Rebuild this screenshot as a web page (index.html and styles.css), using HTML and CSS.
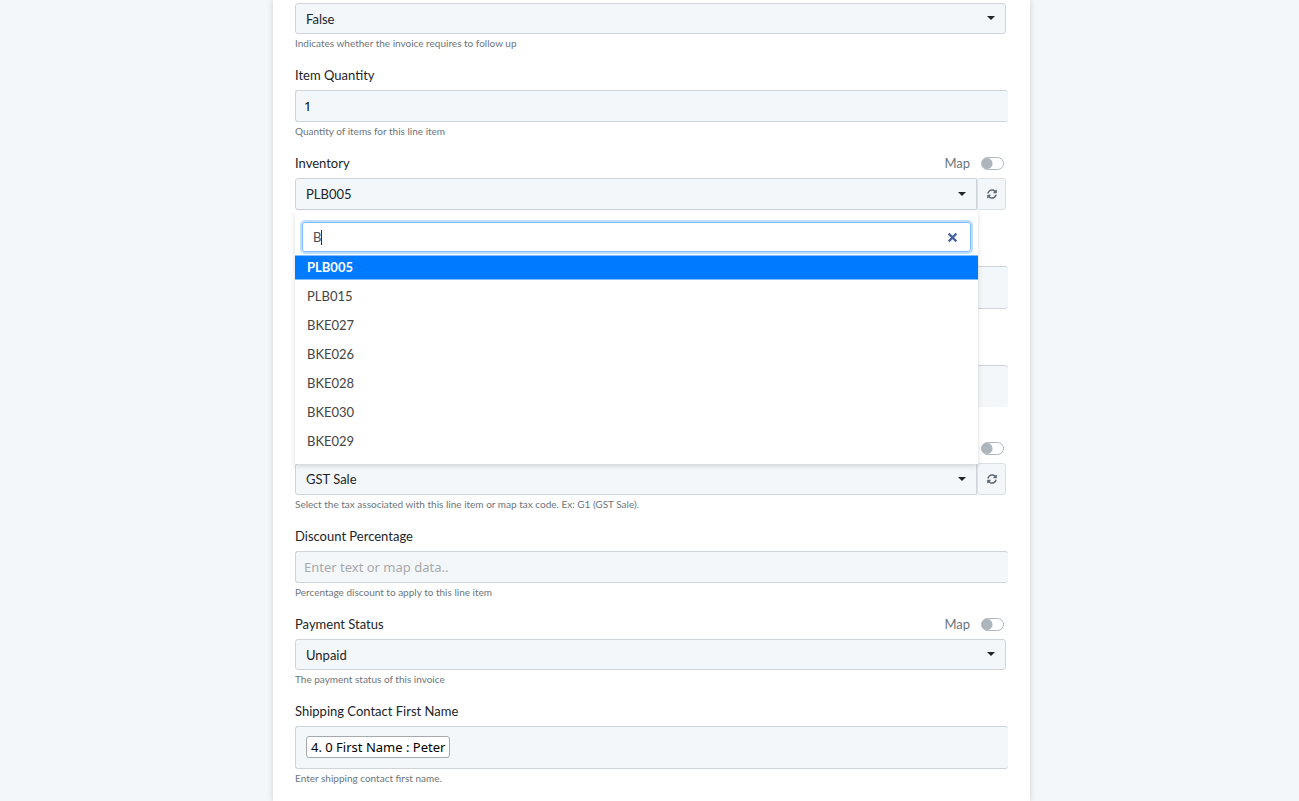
FILE: index.html
```html
<!DOCTYPE html>
<html lang="en">
<head>
  <meta charset="UTF-8">
  <meta name="viewport" content="width=device-width, initial-scale=1.0">
  <title>Invoice action</title>
  <link rel="stylesheet" href="styles.css">
</head>
<body>
  <svg class="sprite" aria-hidden="true">
    <symbol id="icon-refresh" viewBox="0 0 512 512">
      <path d="M370.7 133.3C339.500 104 298.900 88 255.800 88c-77.500.1-144.300 53.200-162.800 126.900-1.300 5.400-6.100 9.100-11.700 9.100H24.100c-7.500 0-13.200-6.800-11.800-14.200C33.900 94.900 134.800 8 256 8c66.400 0 126.800 26.100 171.300 68.700L463 41c15.100-15.100 41-4.400 41 17v134c0 13.300-10.700 24-24 24H346c-21.400 0-32.100-25.900-17-41l41.700-41.700zM32 296h134c21.400 0 32.100 25.900 17 41l-41.800 41.800c31.300 29.300 71.800 45.300 114.900 45.300 77.400-.1 144.300-53.100 162.800-126.900 1.300-5.400 6.100-9.100 11.700-9.100h57.300c7.500 0 13.200 6.800 11.800 14.200C478.100 417.100 377.200 504 256 504c-66.400 0-126.800-26.100-171.300-68.700L49 471c-15.100 15.100-41 4.400-41-17V320c0-13.300 10.700-24 24-24z"/>
    </symbol>
  </svg>

  <main class="card">
    <form class="form">
      <div class="field">
        <div class="select-wrap short">
          <select class="control" id="follow-up" aria-label="Follow Up">
            <option>False</option>
          </select>
        </div>
        <p class="help">Indicates whether the invoice requires to follow up</p>
      </div>

      <div class="field">
        <div class="label-row">
          <label for="quantity">Item Quantity</label>
        </div>
        <input type="text" class="control text-control" id="quantity" value="1">
        <p class="help">Quantity of items for this line item</p>
      </div>

      <div class="field">
        <div class="label-row">
          <label for="inventory">Inventory</label>
          <label class="map">Map <input type="checkbox" class="toggle"></label>
        </div>
        <div class="select-group">
          <div class="select-wrap">
            <select class="control" id="inventory">
              <option>PLB005</option>
            </select>
          </div>
          <button type="button" class="refresh" aria-label="Refresh inventory">
            <svg><use href="#icon-refresh"/></svg>
          </button>
          <div class="dropdown">
            <div class="search">
              <input type="text" class="search-input" aria-label="Search inventory" value="B">
              <button type="button" class="clear" aria-label="Clear">
                <svg viewBox="0 0 10 10"><path d="M1.500 1.500 8.500 8.500M8.500 1.500 1.500 8.500"/></svg>
              </button>
            </div>
            <ul class="options" role="listbox" aria-label="Inventory">
              <li class="option active" role="option" aria-selected="true">PLB005</li>
              <li class="option" role="option">PLB015</li>
              <li class="option" role="option">BKE027</li>
              <li class="option" role="option">BKE026</li>
              <li class="option" role="option">BKE028</li>
              <li class="option" role="option">BKE030</li>
              <li class="option" role="option">BKE029</li>
            </ul>
          </div>
        </div>
        <p class="help"></p>
      </div>

      <div class="field">
        <div class="label-row"></div>
        <div class="control text-control tags"></div>
        <p class="help"></p>
      </div>

      <div class="field">
        <div class="label-row"></div>
        <div class="control text-control tags open"></div>
        <p class="help"></p>
      </div>

      <div class="field">
        <div class="label-row end">
          <div class="map"><input type="checkbox" class="toggle" aria-label="Map"></div>
        </div>
        <div class="select-group">
          <div class="select-wrap">
            <select class="control" id="tax" aria-label="Tax">
              <option>GST Sale</option>
            </select>
          </div>
          <button type="button" class="refresh" aria-label="Refresh tax">
            <svg><use href="#icon-refresh"/></svg>
          </button>
        </div>
        <p class="help">Select the tax associated with this line item or map tax code. Ex: G1 (GST Sale).</p>
      </div>

      <div class="field">
        <div class="label-row">
          <label for="discount">Discount Percentage</label>
        </div>
        <input type="text" class="control text-control" id="discount" placeholder="Enter text or map data..">
        <p class="help">Percentage discount to apply to this line item</p>
      </div>

      <div class="field">
        <div class="label-row">
          <label for="payment">Payment Status</label>
          <label class="map">Map <input type="checkbox" class="toggle"></label>
        </div>
        <div class="select-wrap short">
          <select class="control" id="payment">
            <option>Unpaid</option>
          </select>
        </div>
        <p class="help">The payment status of this invoice</p>
      </div>

      <div class="field">
        <div class="label-row">
          <span id="first-name-label">Shipping Contact First Name</span>
        </div>
        <div class="control text-control tags" role="textbox" tabindex="0" aria-labelledby="first-name-label">
          <span class="tag">4. 0 First Name : Peter</span>
        </div>
        <p class="help">Enter shipping contact first name.</p>
      </div>
    </form>
  </main>
</body>
</html>
```

FILE: styles.css
```css
* {
  margin: 0;
  padding: 0;
  box-sizing: border-box;
}

body {
  display: flex;
  justify-content: center;
  min-height: 100vh;
  padding-left: 4px;
  background-color: #f3f7fa;
  font-family: Lato, sans-serif;
  font-size: 13px;
  color: #212529;
}

.sprite {
  display: none;
}

/* Card */
.card {
  width: 100%;
  max-width: 757px;
  padding: 3px 22px 0;
  background-color: #fff;
  box-shadow: 0 0 6px rgba(0, 0, 0, 0.16);
}

.field {
  margin-bottom: 13px;
}

.label-row {
  display: flex;
  justify-content: space-between;
  align-items: center;
  height: 20px;
  margin-bottom: 5px;
  font-size: 13px;
}

.label-row.end {
  justify-content: flex-end;
}

.help {
  height: 16px;
  margin-top: 2px;
  font-size: 10px;
  line-height: 14px;
  color: #6c757d;
}

/* Controls */
.control {
  display: block;
  width: 100%;
  height: 32px;
  padding: 0 10px;
  border: 1px solid #ced4da;
  border-radius: 3px;
  background-color: #f3f7fa;
  font-family: inherit;
  font-size: 13px;
  color: #212529;
  outline: none;
  appearance: none;
}

.text-control {
  padding: 0 8px 1px;
  border-right: none;
  font-family: "Noto Sans", sans-serif;
  color: #000;
}

.text-control::placeholder {
  color: #a9a9a9;
}

.tags {
  display: flex;
  align-items: center;
  height: 43px;
  padding: 0 10px 1px;
}

.tags.open {
  height: 42px;
  border-bottom: none;
}

.tag {
  height: 22px;
  padding: 0 4px;
  border: 1px solid #a5a9ad;
  border-radius: 3px;
  background-color: #fff;
  line-height: 20px;
}

.select-wrap {
  position: relative;
  flex: 1;
}

.select-wrap::after {
  content: "";
  position: absolute;
  top: 13px;
  right: 11px;
  border: 4px solid transparent;
  border-top-color: #212529;
  border-bottom: none;
  pointer-events: none;
}

.short {
  margin-right: 2px;
}

.short .control {
  height: 31px;
}

.select-group {
  position: relative;
  display: flex;
  margin-right: 2px;
}

.select-group .control {
  border-radius: 3px 0 0 3px;
}

.select-group .select-wrap::after {
  top: 14px;
}

.refresh {
  display: flex;
  align-items: center;
  justify-content: center;
  width: 29px;
  height: 32px;
  border: 1px solid #dbe0e5;
  border-radius: 3px;
  background-color: #f3f7fa;
  cursor: pointer;
}

.refresh svg {
  width: 10px;
  height: 10px;
  fill: #5f6b76;
}

/* Map switch */
.map {
  display: flex;
  align-items: center;
  gap: 11px;
  margin-right: 4px;
  color: #6c757d;
}

.toggle {
  width: 23px;
  height: 13px;
  border: 1px solid #adb5bd;
  border-radius: 7px;
  background: radial-gradient(circle at 5px 50%, #adb5bd 5px, #fff 6px);
  appearance: none;
}

/* Dropdown */
.dropdown {
  position: absolute;
  top: 33px;
  left: 0;
  right: 28px;
  z-index: 10;
  padding: 11px 0 10px;
  background-color: #fff;
  box-shadow: 0 2px 5px rgba(0, 0, 0, 0.15);
}

.search {
  position: relative;
  display: flex;
  align-items: center;
  height: 30px;
  margin: 0 7px 3px;
  padding: 0 12px 0 10px;
  border: 1px solid #80bdff;
  border-radius: 3px;
  box-shadow: 0 0 0 2px #bfdeff;
}

/* text cursor */
.search::after {
  content: "";
  position: absolute;
  left: 18px;
  width: 1px;
  height: 15px;
  background-color: #333;
}

.search-input {
  flex: 1;
  min-width: 0;
  border: none;
  outline: none;
  background: none;
  font-family: inherit;
  font-size: 13px;
  color: #495057;
}

.clear {
  display: flex;
  border: none;
  background: none;
  cursor: pointer;
}

.clear svg {
  width: 11px;
  height: 11px;
  fill: none;
  stroke: #4463a0;
  stroke-width: 2;
}

.options {
  display: flex;
  flex-direction: column;
  gap: 4px;
  list-style: none;
}

.option {
  height: 25px;
  padding: 0 12px;
  line-height: 25px;
  color: #444;
}

.option.active {
  border: solid #7dbcff;
  border-width: 1px 0;
  background-color: #007bff;
  line-height: 23px;
  font-weight: bold;
  color: #fff;
}
```
